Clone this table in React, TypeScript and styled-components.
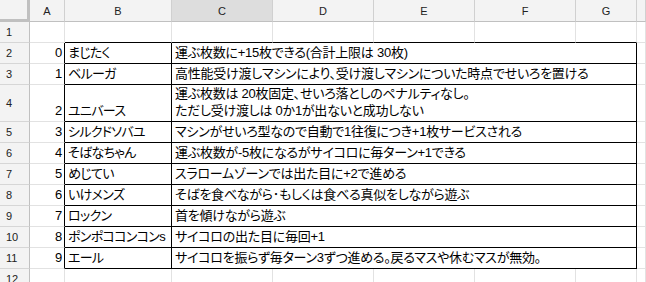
import React from 'react';
import styled, { createGlobalStyle } from 'styled-components';

interface Entry {
  no: number;
  name: string;
  lines: string[];
}

const GlobalStyle = createGlobalStyle`
  html, body {
    margin: 0;
    padding: 0;
    background: #ffffff;
    overflow: hidden;
  }
`;

const Sheet = styled.div`
  display: grid;
  grid-template-columns: 30px 35px 107px 101px 101px 101px 101px 61px 1fr;
  grid-template-rows: 22px 21px 21px 21px 37px repeat(8, 21px);
  width: 646px;
  height: 282px;
  overflow: hidden;
  font-family: 'Liberation Sans', 'Noto Sans CJK JP', sans-serif;
`;

const Corner = styled.div`
  background: #f3f3f3;
  border-right: 3px solid #c0c0c0;
  border-bottom: 3px solid #c0c0c0;
  box-sizing: border-box;
`;

const ColHead = styled.div<{ $active?: boolean }>`
  display: flex;
  align-items: center;
  justify-content: center;
  box-sizing: border-box;
  background: ${p => (p.$active ? '#dddddd' : '#f3f3f3')};
  border-right: 1px solid #d0d0d0;
  border-bottom: 1px solid #c0c0c0;
  font-size: 11px;
  color: #222222;
`;

const RowHead = styled.div`
  display: flex;
  align-items: center;
  padding-left: 6px;
  box-sizing: border-box;
  background: #f3f3f3;
  border-right: 1px solid #c0c0c0;
  border-bottom: 1px solid #d6d6d6;
  font-size: 11px;
  color: #222222;
`;

// one spreadsheet cell; $right / $bottom turn the gridline into a black border
const Cell = styled.div<{ $right?: boolean; $bottom?: boolean; $span?: number }>`
  grid-column: span ${p => p.$span ?? 1};
  display: flex;
  flex-direction: column;
  justify-content: flex-end;
  box-sizing: border-box;
  min-width: 0;
  border-right: 1px solid ${p => (p.$right ? '#000000' : '#e2e2e2')};
  border-bottom: 1px solid ${p => (p.$bottom ? '#000000' : '#e2e2e2')};
  padding: 0 3px 2px 3px;
  font-size: 13px;
  line-height: 17px;
  letter-spacing: -0.25px;
  color: #000000;
  white-space: nowrap;
  font-feature-settings: 'palt';
`;

const NumCell = styled(Cell)`
  align-items: flex-end;
  padding-right: 2px;
`;

const NameCell = styled(Cell)`
  overflow: hidden;
  letter-spacing: -0.7px;
`;

const entries: Entry[] = [
  { no: 0, name: 'まじたく', lines: ['運ぶ枚数に+15枚できる(合計上限は 30枚)'] },
  { no: 1, name: 'ベルーガ', lines: ['高性能受け渡しマシンにより、受け渡しマシンについた時点でせいろを置ける'] },
  {
    no: 2,
    name: 'ユニバース',
    lines: ['運ぶ枚数は 20枚固定、せいろ落としのペナルティなし。', 'ただし受け渡しは 0か1が出ないと成功しない'],
  },
  { no: 3, name: 'シルクドソバユ', lines: ['マシンがせいろ型なので自動で1往復につき+1枚サービスされる'] },
  { no: 4, name: 'そばなちゃん', lines: ['運ぶ枚数が-5枚になるがサイコロに毎ターン+1できる'] },
  { no: 5, name: 'めじてい', lines: ['スラロームゾーンでは出た目に+2で進める'] },
  { no: 6, name: 'いけメンズ', lines: ['そばを食べながら･もしくは食べる真似をしながら遊ぶ'] },
  { no: 7, name: 'ロックン', lines: ['首を傾けながら遊ぶ'] },
  { no: 8, name: 'ポンポココンコンs', lines: ['サイコロの出た目に毎回+1'] },
  { no: 9, name: 'エール', lines: ['サイコロを振らず毎ターン3ずつ進める。戻るマスや休むマスが無効。'] },
];

const columns = ['A', 'B', 'C', 'D', 'E', 'F', 'G', ''];

function App(): React.ReactElement {
  const rowCount = 12;

  return (
    <>
      <GlobalStyle />
      <Sheet>
        <Corner />
        {columns.map((c, i) => (
          <ColHead key={`h${i}`} $active={c === 'C'}>
            {c}
          </ColHead>
        ))}
        {Array.from({ length: rowCount }, (_, r) => {
          const entry = r >= 1 && r <= 10 ? entries[r - 1] : undefined;
          if (entry) {
            return (
              <React.Fragment key={`r${r}`}>
                <RowHead>{r + 1}</RowHead>
                <NumCell $right>{entry.no}</NumCell>
                <NameCell $right $bottom>
                  {entry.name}
                </NameCell>
                <Cell $right $bottom $span={5}>
                  {entry.lines.map(line => (
                    <div key={line}>{line}</div>
                  ))}
                </Cell>
                <Cell />
              </React.Fragment>
            );
          }
          return (
            <React.Fragment key={`r${r}`}>
              <RowHead>{r + 1}</RowHead>
              {Array.from({ length: 8 }, (_, c) => (
                <Cell key={`c${r}-${c}`} $bottom={r === 0 && c >= 1 && c <= 6} />
              ))}
            </React.Fragment>
          );
        })}
      </Sheet>
    </>
  );
}

export default App;
